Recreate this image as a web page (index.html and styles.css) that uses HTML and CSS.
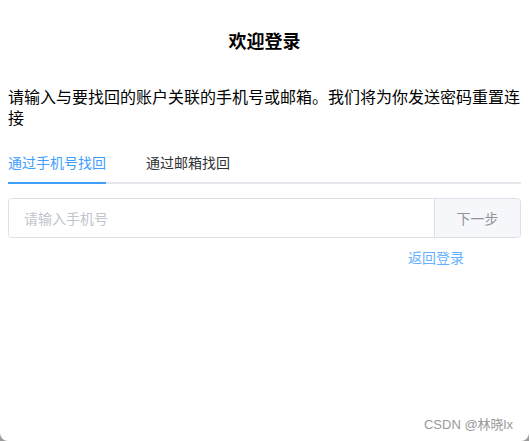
FILE: index.html
```html
<!DOCTYPE html>
<html lang="zh">
<head>
<meta charset="utf-8">
<link rel="stylesheet" href="styles.css">
</head>
<body>
<div class="dialog">
  <h2 class="title">欢迎登录</h2>
  <p class="desc">请输入与要找回的账户关联的手机号或邮箱。我们将为你发送密码重置连接</p>
  <div class="tabs">
    <div class="tab active">通过手机号找回</div>
    <div class="tab">通过邮箱找回</div>
  </div>
  <div class="input-group">
    <input class="input" type="text" placeholder="请输入手机号">
    <button class="append">下一步</button>
  </div>
  <div class="back-row">
    <a class="back">返回登录</a>
  </div>
  <div class="watermark">CSDN @林晓lx</div>
</div>
</body>
</html>
```
FILE: styles.css
```css
* { box-sizing: border-box; }
html, body { margin: 0; padding: 0; }
body {
  background: #9a9a9a;
  font-family: "Noto Sans CJK SC", "Microsoft YaHei", sans-serif;
  width: 529px;
  height: 441px;
  overflow: hidden;
}
.dialog {
  position: relative;
  background: #fff;
  height: 441px;
  border-radius: 0 0 8px 8px;
  padding: 28px 8px 0 8px;
}
.title {
  margin: 0;
  text-align: center;
  font-size: 18px;
  line-height: 25px;
  font-weight: bold;
  color: #000;
}
.desc {
  margin: 33px 0 0 0;
  font-size: 16px;
  line-height: 21px;
  color: #000;
}
.tabs {
  margin-top: 14px;
  display: flex;
  height: 40px;
  border-bottom: 2px solid #e4e7ed;
  box-sizing: content-box;
}
.tab {
  height: 42px;
  line-height: 40px;
  font-size: 14px;
  color: #303133;
  padding: 0 20px;
}
.tab:first-child { padding-left: 0; }
.tab:last-child { padding-right: 0; }
.tab.active {
  color: #409eff;
  position: relative;
}
.tab.active::after {
  content: "";
  position: absolute;
  left: 0;
  right: 20px;
  bottom: 0;
  height: 2px;
  background: #409eff;
}
.input-group {
  margin-top: 14px;
  display: flex;
  height: 40px;
  border: 1px solid #dcdfe6;
  border-radius: 4px;
  overflow: hidden;
}
.input {
  flex: 1;
  border: none;
  outline: none;
  padding: 0 15px;
  font-size: 14px;
  font-family: inherit;
  color: #606266;
  background: #fff;
}
.input::placeholder { color: #c0c4cc; }
.append {
  border: none;
  border-left: 1px solid #dcdfe6;
  background: #f5f7fa;
  color: #909399;
  font-size: 14px;
  font-family: inherit;
  padding: 0 20px;
  width: 86px;
}
.back-row {
  display: flex;
  justify-content: flex-end;
  padding-right: 57px;
  margin-top: 9px;
}
.back {
  font-size: 14px;
  line-height: 20px;
  color: #66b1ff;
  cursor: pointer;
}
.watermark {
  position: absolute;
  right: 16px;
  bottom: 8px;
  font-family: "Liberation Sans", "Noto Sans CJK SC", sans-serif;
  font-size: 13px;
  color: #999;
}
```
